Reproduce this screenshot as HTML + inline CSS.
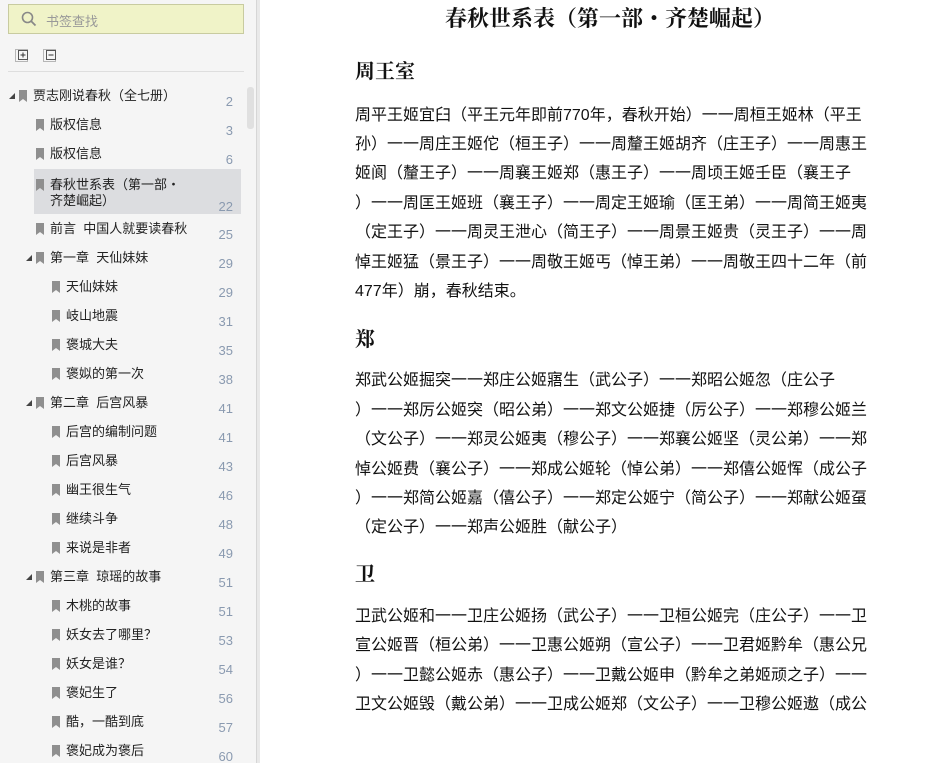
<!DOCTYPE html>
<html><head><meta charset="utf-8"><style>
*{margin:0;padding:0;box-sizing:border-box}
body{width:934px;height:763px;overflow:hidden;background:#fff;font-family:"Liberation Sans","Noto Sans CJK SC",sans-serif;position:relative}
#side{position:absolute;left:0;top:0;width:257px;height:763px;background:#f5f5f5;border-right:1px solid #d6d6d6}
#edge{position:absolute;left:257px;top:0;width:3px;height:763px;background:#e9e9e9}
.search{position:absolute;left:8px;top:4px;width:236px;height:30px;background:#f0f3c8;border:1px solid #c8cba0}
.search span{position:absolute;left:37px;top:6px;font-size:13px;color:#999}
.hr{position:absolute;left:8px;top:71px;width:236px;height:1px;background:#dedede}
.it{position:absolute;font-size:13px;color:#222;white-space:nowrap;line-height:16px}
.n{position:absolute;font-size:13px;color:#8a9ab0;text-align:right}
.bm{position:absolute;width:8px;height:12px;background:#8f8f8f;clip-path:polygon(0 0,100% 0,100% 100%,50% 75%,0 100%)}
.tri{position:absolute;width:0;height:0;border-left:6px solid transparent;border-bottom:6px solid #444}
.sel{position:absolute;left:34px;top:169px;width:207px;height:45px;background:#dcdde0}
.sb{position:absolute;left:247px;top:87px;width:7px;height:42px;background:#e0e0e0;border-radius:3px}
.c{position:absolute;white-space:nowrap;font-size:16px;color:#111;font-family:"Liberation Sans","Noto Sans CJK SC",sans-serif;line-height:20px}
.h{position:absolute;font-family:"Noto Serif CJK SC","Liberation Serif",serif;font-weight:bold;color:#111}
</style></head><body>
<div id="side">
<div class="search"><svg style="position:absolute;left:12px;top:6px" width="16" height="16"><circle cx="6.5" cy="6.5" r="5" fill="none" stroke="#888" stroke-width="1.6"/><line x1="10" y1="10" x2="14.5" y2="14.5" stroke="#888" stroke-width="1.8"/></svg><span>书签查找</span></div>
<svg style="position:absolute;left:14px;top:48px" width="50" height="16"><rect x="1.5" y="1.5" width="12" height="12" fill="none" stroke="#777" stroke-dasharray="1,1"/><rect x="4.5" y="2.5" width="9" height="9" fill="#f5f5f5" stroke="#555"/><line x1="6.5" y1="7" x2="11.5" y2="7" stroke="#333"/><line x1="9" y1="4.5" x2="9" y2="9.5" stroke="#333"/><rect x="29.5" y="1.5" width="12" height="12" fill="none" stroke="#777" stroke-dasharray="1,1"/><rect x="32.5" y="2.5" width="9" height="9" fill="#f5f5f5" stroke="#555"/><line x1="34.5" y1="7" x2="39.5" y2="7" stroke="#333"/></svg>
<div class="hr"></div>
<div class="sb"></div>
<div class="sel"></div>
</div>
<div id="edge"></div>
<div id="list"></div>
<div class="h" style="left:0;width:1220px;text-align:center;top:2px;font-size:22px;line-height:32px">春秋世系表（第一部・齐楚崛起）</div>
<div class="h" style="left:355px;top:55px;font-size:20px;line-height:30px">周王室</div>
<div class="h" style="left:355px;top:323px;font-size:20px;line-height:30px">郑</div>
<div class="h" style="left:355px;top:558px;font-size:20px;line-height:30px">卫</div>
<div class="c" style="left:355px;top:106px">周平王姬宜臼（平王元年即前770年，春秋开始）一一周桓王姬林（平王</div>
<div class="c" style="left:355px;top:135px">孙）一一周庄王姬佗（桓王子）一一周釐王姬胡齐（庄王子）一一周惠王</div>
<div class="c" style="left:355px;top:164px">姬阆（釐王子）一一周襄王姬郑（惠王子）一一周顷王姬壬臣（襄王子</div>
<div class="c" style="left:355px;top:194px">）一一周匡王姬班（襄王子）一一周定王姬瑜（匡王弟）一一周简王姬夷</div>
<div class="c" style="left:355px;top:223px">（定王子）一一周灵王泄心（简王子）一一周景王姬贵（灵王子）一一周</div>
<div class="c" style="left:355px;top:253px">悼王姬猛（景王子）一一周敬王姬丐（悼王弟）一一周敬王四十二年（前</div>
<div class="c" style="left:355px;top:282px">477年）崩，春秋结束。</div>
<div class="c" style="left:355px;top:371px">郑武公姬掘突一一郑庄公姬寤生（武公子）一一郑昭公姬忽（庄公子</div>
<div class="c" style="left:355px;top:401px">）一一郑厉公姬突（昭公弟）一一郑文公姬捷（厉公子）一一郑穆公姬兰</div>
<div class="c" style="left:355px;top:430px">（文公子）一一郑灵公姬夷（穆公子）一一郑襄公姬坚（灵公弟）一一郑</div>
<div class="c" style="left:355px;top:460px">悼公姬费（襄公子）一一郑成公姬轮（悼公弟）一一郑僖公姬恽（成公子</div>
<div class="c" style="left:355px;top:489px">）一一郑简公姬嘉（僖公子）一一郑定公姬宁（简公子）一一郑献公姬虿</div>
<div class="c" style="left:355px;top:518px">（定公子）一一郑声公姬胜（献公子）</div>
<div class="c" style="left:355px;top:607px">卫武公姬和一一卫庄公姬扬（武公子）一一卫桓公姬完（庄公子）一一卫</div>
<div class="c" style="left:355px;top:636px">宣公姬晋（桓公弟）一一卫惠公姬朔（宣公子）一一卫君姬黔牟（惠公兄</div>
<div class="c" style="left:355px;top:666px">）一一卫懿公姬赤（惠公子）一一卫戴公姬申（黔牟之弟姬顽之子）一一</div>
<div class="c" style="left:355px;top:695px">卫文公姬毁（戴公弟）一一卫成公姬郑（文公子）一一卫穆公姬遨（成公</div>
<script>
var items=[[0,"贾志刚说春秋（全七册）","2",96,1],[1,"版权信息","3",125],[1,"版权信息","6",154],[1,"春秋世系表（第一部・<br>齐楚崛起）","22",185,0,1],[1,"前言&nbsp; 中国人就要读春秋","25",229],[1,"第一章&nbsp; 天仙妹妹","29",258,1],[2,"天仙妹妹","29",287],[2,"岐山地震","31",316],[2,"褒城大夫","35",345],[2,"褒姒的第一次","38",374],[1,"第二章&nbsp; 后宫风暴","41",403,1],[2,"后宫的编制问题","41",432],[2,"后宫风暴","43",461],[2,"幽王很生气","46",490],[2,"继续斗争","48",519],[2,"来说是非者","49",548],[1,"第三章&nbsp; 琼瑶的故事","51",577,1],[2,"木桃的故事","51",606],[2,"妖女去了哪里？","53",635],[2,"妖女是谁？","54",664],[2,"褒妃生了","56",693],[2,"酷，一酷到底","57",722],[2,"褒妃成为褒后","60",751]];
var h="";items.forEach(function(a){var l=a[0],tx=[33,50,66][l],y=a[3];
var ty=y-8;
h+='<div class="it" style="left:'+tx+'px;top:'+ty+'px">'+a[1]+'</div>';
h+='<div class="bm" style="left:'+(tx-14)+'px;top:'+(ty+2)+'px"></div>';
if(a[4])h+='<div class="tri" style="left:'+(tx-24)+'px;top:'+(ty+5)+'px"></div>';
var ny=a[5]?y+14:y-2;h+='<div class="n" style="right:'+(934-233)+'px;top:'+ny+'px">'+a[2]+'</div>';});
document.getElementById("list").innerHTML=h;
</script>
</body></html>
